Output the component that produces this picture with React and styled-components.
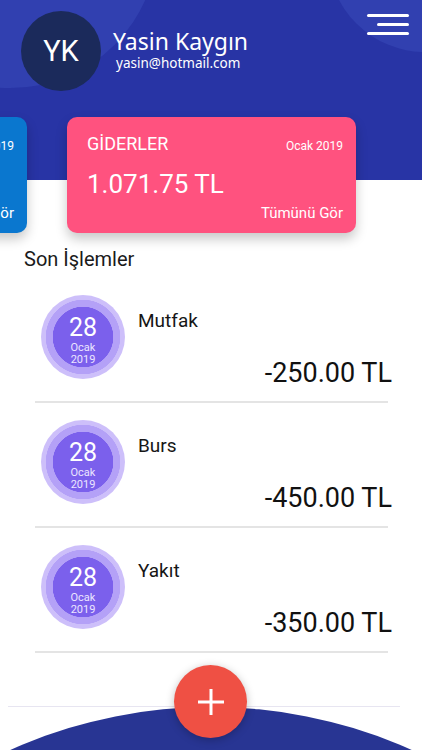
import React from "react";
import styled, { createGlobalStyle } from "styled-components";

const GlobalStyle = createGlobalStyle`
  html, body {
    margin: 0;
    padding: 0;
    background: #fff;
  }
  body {
    font-family: Roboto, "Liberation Sans", sans-serif;
  }
  * {
    box-sizing: border-box;
  }
`;

const Screen = styled.div`
  width: 422px;
  height: 750px;
  overflow: hidden;
  position: relative;
  display: flex;
  flex-direction: column;
  background: #fff;
`;

const Header = styled.header`
  position: relative;
  background: linear-gradient(#2834a5 0, #2834a5 180px, #fff 180px);

  &::before,
  &::after {
    content: "";
    position: absolute;
    border-radius: 50%;
    background: #3140b0;
  }

  &::before {
    left: -138px;
    top: -208px;
    width: 296px;
    height: 296px;
  }

  &::after {
    left: 328px;
    top: -142px;
    width: 194px;
    height: 194px;
  }
`;

const Profile = styled.div`
  position: relative;
  z-index: 1;
  display: flex;
  padding: 11px 13px 0 21px;
`;

const Avatar = styled.div`
  width: 80px;
  height: 80px;
  border-radius: 50%;
  background: #1b2a5b;
  color: #fff;
  display: flex;
  align-items: center;
  justify-content: center;
  font-family: Roboto, sans-serif;
  font-size: 29px;
  flex-shrink: 0;
`;

const UserInfo = styled.div`
  margin: 16px 0 0 12px;
  display: flex;
  flex-direction: column;
  color: #fff;
  font-family: "Noto Sans", "Open Sans", sans-serif;
`;

const UserName = styled.div`
  font-size: 23px;
  line-height: 28px;
`;

const UserMail = styled.div`
  font-size: 13.5px;
  line-height: 16px;
  padding-left: 3px;
`;

const MenuButton = styled.button`
  margin: 3px 0 0 auto;
  padding: 0;
  border: 0;
  background: none;
  width: 42px;
  height: 21px;
  display: flex;
  flex-direction: column;
  align-items: flex-end;
  justify-content: space-between;
`;

const MenuLine = styled.span`
  display: block;
  height: 3px;
  border-radius: 2px;
  background: #fff;
  width: ${(p) => p.$w}px;
`;

const Cards = styled.div`
  position: relative;
  z-index: 1;
  margin-top: 26px;
  display: flex;
  gap: 40px;
  margin-left: -262px;
`;

const Card = styled.div`
  flex-shrink: 0;
  width: 289px;
  height: 116px;
  border-radius: 10px;
  background: ${(p) => p.$color};
  box-shadow: 0 6px 12px rgba(0, 0, 0, 0.22);
  color: #fff;
  padding: 16px 13px 11px 20px;
  display: flex;
  flex-direction: column;
`;

const CardTop = styled.div`
  display: flex;
  justify-content: space-between;
  align-items: baseline;
`;

const CardTitle = styled.div`
  font-size: 18px;
  line-height: 21px;
`;

const CardDate = styled.div`
  font-size: 12px;
`;

const CardAmount = styled.div`
  margin-top: 15px;
  font-size: 26px;
  line-height: 30px;
`;

const CardLink = styled.div`
  margin-top: auto;
  align-self: flex-end;
  font-size: 15px;
  line-height: 18px;
`;

const SectionTitle = styled.h2`
  margin: 14px 0 0 24px;
  font-size: 20px;
  line-height: 24px;
  font-weight: 400;
  color: #1a1a1a;
`;

const List = styled.div`
  margin: 7px 34px 0 35px;
`;

const Item = styled.div`
  display: flex;
  align-items: flex-start;
  padding: 17px 0 12px 6px;
  border-bottom: 2px solid #e4e4e4;
`;

const DateBadge = styled.div`
  width: 84px;
  height: 84px;
  border-radius: 50%;
  flex-shrink: 0;
  background: radial-gradient(
    circle,
    #7b60ec 0,
    #7b60ec 30px,
    #b4a1f7 30.5px,
    #b4a1f7 37px,
    #cdbffa 37.5px
  );
  display: flex;
  flex-direction: column;
  align-items: center;
  justify-content: center;
  padding-top: 6px;
  color: #fff;
`;

const Day = styled.div`
  font-size: 25px;
  line-height: 28px;
`;

const Small = styled.div`
  font-size: 11px;
  line-height: 12px;
  color: #ece6ff;
`;

const ItemInfo = styled.div`
  flex: 1;
  margin-left: 13px;
  display: flex;
  flex-direction: column;
`;

const ItemTitle = styled.div`
  margin-top: 15px;
  font-size: 19px;
  line-height: 22px;
  color: #161616;
`;

const ItemAmount = styled.div`
  margin: 25px -4px 0 0;
  align-self: flex-end;
  font-size: 27px;
  line-height: 32px;
  color: #111;
`;

const Footer = styled.footer`
  margin-top: auto;
  position: relative;
  height: 44px;

  &::after {
    content: "";
    position: absolute;
    left: -279px;
    top: 1px;
    width: 980px;
    height: 980px;
    border-radius: 50%;
    background: #283593;
  }
`;

const FooterLine = styled.div`
  height: 1px;
  margin: 0 22px 0 8px;
  background: #e7e5f1;
`;

const Fab = styled.button`
  position: absolute;
  z-index: 2;
  left: 50%;
  top: -41px;
  margin-left: -37px;
  width: 73px;
  height: 73px;
  border-radius: 50%;
  border: 0;
  padding: 0;
  background: #ef5044;
  box-shadow: 0 2px 8px rgba(0, 0, 0, 0.25);
  display: flex;
  align-items: center;
  justify-content: center;
`;

const transactions = [
  { title: "Mutfak", amount: "-250.00 TL" },
  { title: "Burs", amount: "-450.00 TL" },
  { title: "Yakıt", amount: "-350.00 TL" },
];

export default function App() {
  return (
    <>
      <GlobalStyle />
      <Screen>
        <Header>
          <Profile>
            <Avatar>YK</Avatar>
            <UserInfo>
              <UserName>Yasin Kaygın</UserName>
              <UserMail>yasin@hotmail.com</UserMail>
            </UserInfo>
            <MenuButton aria-label="menu">
              <MenuLine $w={42} />
              <MenuLine $w={32} />
              <MenuLine $w={42} />
            </MenuButton>
          </Profile>
          <Cards>
            <Card $color="#0a77cf">
              <CardTop>
                <CardTitle>GELİRLER</CardTitle>
                <CardDate>Ocak 2019</CardDate>
              </CardTop>
              <CardAmount>2.500.00 TL</CardAmount>
              <CardLink>Tümünü Gör</CardLink>
            </Card>
            <Card $color="#ff527f">
              <CardTop>
                <CardTitle>GİDERLER</CardTitle>
                <CardDate>Ocak 2019</CardDate>
              </CardTop>
              <CardAmount>1.071.75 TL</CardAmount>
              <CardLink>Tümünü Gör</CardLink>
            </Card>
          </Cards>
        </Header>

        <SectionTitle>Son İşlemler</SectionTitle>
        <List>
          {transactions.map((t) => (
            <Item key={t.title}>
              <DateBadge>
                <Day>28</Day>
                <Small>Ocak</Small>
                <Small>2019</Small>
              </DateBadge>
              <ItemInfo>
                <ItemTitle>{t.title}</ItemTitle>
                <ItemAmount>{t.amount}</ItemAmount>
              </ItemInfo>
            </Item>
          ))}
        </List>

        <Footer>
          <FooterLine />
          <Fab aria-label="ekle">
            <svg width="28" height="28" viewBox="0 0 28 28">
              <path d="M14 1v26M1 14h26" stroke="#fff" strokeWidth="3" />
            </svg>
          </Fab>
        </Footer>
      </Screen>
    </>
  );
}
